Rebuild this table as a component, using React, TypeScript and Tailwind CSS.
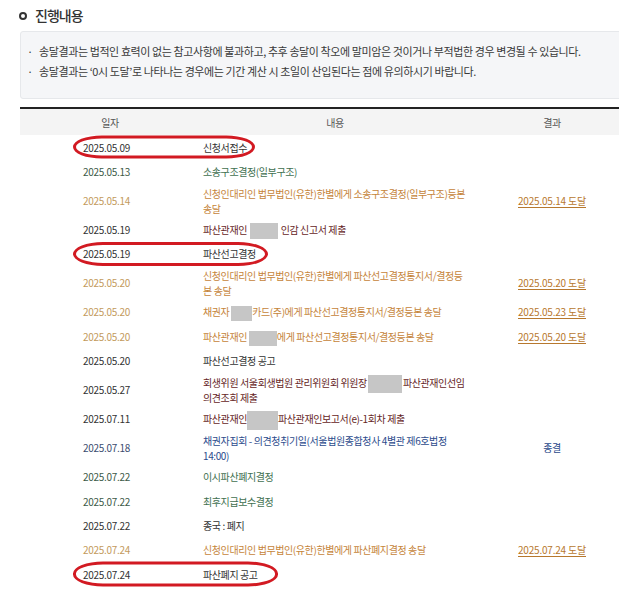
import React from "react";

type Tone = "black" | "green" | "orange" | "maroon" | "blue";

const tones: Record<Tone, { date: string; text: string }> = {
  black: { date: "text-[#333]", text: "text-[#333]" },
  green: { date: "text-[#3d5a47]", text: "text-[#417050]" },
  orange: { date: "text-[#c39a5c]", text: "text-[#c5843a]" },
  maroon: { date: "text-[#333]", text: "text-[#662626]" },
  blue: { date: "text-[#3c4d70]", text: "text-[#2c4b8c]" },
};

function Blur({ className }: { className: string }) {
  return <span className={`inline-block align-middle bg-[#c6c6c6] -my-[3px] ${className}`} />;
}

type Row = {
  date: string;
  tone: Tone;
  lines: React.ReactNode[];
  result?: string;
  resultLink?: boolean;
  circle?: string;
};

const rows: Row[] = [
  { date: "2025.05.09", tone: "black", lines: ["신청서접수"], circle: "w-[182px] h-[23px]" },
  { date: "2025.05.13", tone: "green", lines: ["소송구조결정(일부구조)"] },
  {
    date: "2025.05.14",
    tone: "orange",
    lines: ["신청인대리인 법무법인(유한)한별에게 소송구조결정(일부구조)등본", "송달"],
    result: "2025.05.14 도달",
    resultLink: true,
  },
  {
    date: "2025.05.19",
    tone: "maroon",
    lines: [
      <>
        파산관재인 <Blur className="w-[28px] h-[16px] mx-[1px]" /> 인감 신고서 제출
      </>,
    ],
  },
  { date: "2025.05.19", tone: "black", lines: ["파산선고결정"], circle: "w-[195px] h-[24px]" },
  {
    date: "2025.05.20",
    tone: "orange",
    lines: ["신청인대리인 법무법인(유한)한별에게 파산선고결정통지서/결정등", "본 송달"],
    result: "2025.05.20 도달",
    resultLink: true,
  },
  {
    date: "2025.05.20",
    tone: "orange",
    lines: [
      <>
        채권자 <Blur className="w-[21px] h-[15px]" />
        카드(주)에게 파산선고결정통지서/결정등본 송달
      </>,
    ],
    result: "2025.05.23 도달",
    resultLink: true,
  },
  {
    date: "2025.05.20",
    tone: "orange",
    lines: [
      <>
        파산관재인 <Blur className="w-[28px] h-[15px]" />
        에게 파산선고결정통지서/결정등본 송달
      </>,
    ],
    result: "2025.05.20 도달",
    resultLink: true,
  },
  { date: "2025.05.20", tone: "black", lines: ["파산선고결정 공고"] },
  {
    date: "2025.05.27",
    tone: "maroon",
    lines: [
      <>
        회생위원 서울회생법원 관리위원회 위원장
        <Blur className="w-[34px] h-[18px] mx-[1px]" />
        파산관재인선임
      </>,
      "의견조회 제출",
    ],
  },
  {
    date: "2025.07.11",
    tone: "maroon",
    lines: [
      <>
        파산관재인
        <Blur className="w-[31px] h-[19px]" />
        파산관재인보고서(e)-1회차 제출
      </>,
    ],
  },
  {
    date: "2025.07.18",
    tone: "blue",
    lines: ["채권자집회 - 의견청취기일(서울법원종합청사 4별관 제6호법정", "14:00)"],
    result: "종결",
  },
  { date: "2025.07.22", tone: "green", lines: ["이시파산폐지결정"] },
  { date: "2025.07.22", tone: "green", lines: ["최후지급보수결정"] },
  { date: "2025.07.22", tone: "black", lines: ["종국 : 폐지"] },
  {
    date: "2025.07.24",
    tone: "orange",
    lines: ["신청인대리인 법무법인(유한)한별에게 파산폐지결정 송달"],
    result: "2025.07.24 도달",
    resultLink: true,
  },
  { date: "2025.07.24", tone: "black", lines: ["파산폐지 공고"], circle: "w-[205px] h-[25px]" },
];

export default function App() {
  return (
    <div className="w-[619px] h-[596px] overflow-hidden bg-white font-['Noto_Sans_CJK_KR','Noto_Sans',sans-serif] text-[#222]">
      {/* Title */}
      <div className="flex items-center h-[31px] pl-[19px] gap-[8px]">
        <span className="w-[8px] h-[8px] rounded-full border-[2px] border-[#333]" />
        <h2 className="text-[14px] tracking-[-1px] font-medium text-[#333]">진행내용</h2>
      </div>

      {/* Notice */}
      <div className="ml-[20px] w-[610px] h-[68px] rounded-[3px] border border-[#e6e8eb] bg-[#f5f6f8] pt-[9px] text-[11px] leading-[20px] tracking-[-0.4px] text-[#3a3a3a]">
        <div className="flex">
          <span className="w-[18px] text-center">·</span>
          <span>
            송달결과는 법적인 효력이 없는 참고사항에 불과하고, 추후 송달이 착오에 말미암은 것이거나 부적법한 경우 변경될 수 있습니다.
          </span>
        </div>
        <div className="flex">
          <span className="w-[18px] text-center">·</span>
          <span>
            송달결과는 ‘0시 도달’로 나타나는 경우에는 기간 계산 시 초일이 산입된다는 점에 유의하시기 바랍니다.
          </span>
        </div>
      </div>

      {/* Table */}
      <div className="ml-[20px] mt-[8px] w-[604px] border-t-[2px] border-[#222] text-[10px] tracking-[-0.4px]">
        <div className="grid grid-cols-[180px_280px_144px] h-[26px] items-center bg-[#f4f4f4] text-center text-[#555]">
          <span>일자</span>
          <span className="-ml-[10px]">내용</span>
          <span>결과</span>
        </div>
        {rows.map((r, i) => {
          const t = tones[r.tone];
          return (
            <div
              key={i}
              className={`relative grid grid-cols-[180px_280px_144px] items-center ${
                r.lines.length > 1 ? "h-[33.6px]" : "h-[24.4px]"
              }`}
            >
              <span className={`pl-[63px] tracking-[-0.3px] ${t.date}`}>{r.date}</span>
              <div className={`pl-[3px] leading-[15px] ${t.text}`}>
                {r.lines.map((l, j) => (
                  <div key={j} className="whitespace-nowrap">
                    {l}
                  </div>
                ))}
              </div>
              <span className="text-center">
                {r.result &&
                  (r.resultLink ? (
                    <span className="text-[#b7782e] underline underline-offset-2 tracking-[-0.2px]">{r.result}</span>
                  ) : (
                    <span className="text-[#2c4b8c]">{r.result}</span>
                  ))}
              </span>
              {r.circle && (
                <span
                  className={`absolute left-[53px] top-1/2 -translate-y-1/2 rounded-[30px/12px] border-[3px] border-[#d21a22] ${r.circle}`}
                />
              )}
            </div>
          );
        })}
      </div>
    </div>
  );
}
